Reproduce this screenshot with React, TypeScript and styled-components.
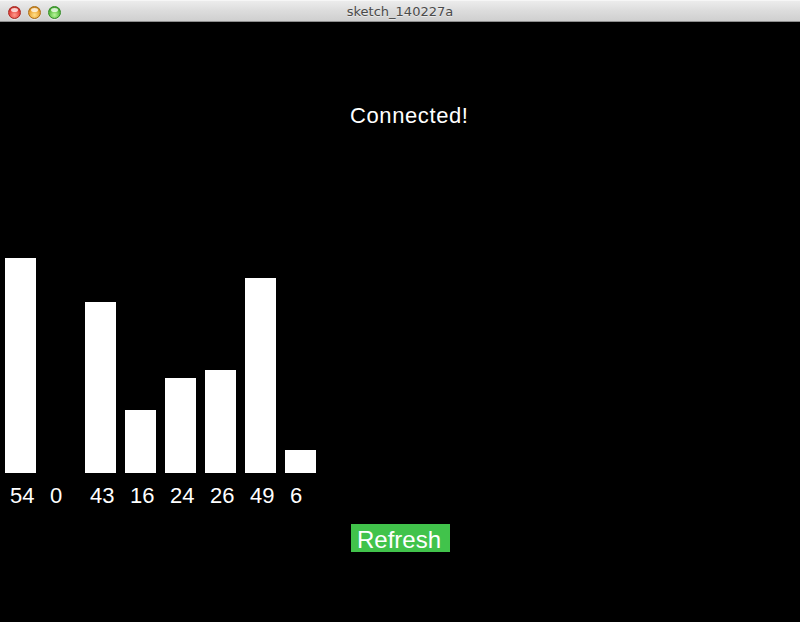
import React from "react";
import styled, { createGlobalStyle } from "styled-components";

const Global = createGlobalStyle`
  html, body { margin: 0; padding: 0; background: #000; }
  #root { width: 800px; height: 622px; overflow: hidden; }
`;

const Window = styled.div`
  width: 800px;
  height: 622px;
  display: flex;
  flex-direction: column;
  background: #000;
`;

const TitleBar = styled.div`
  position: relative;
  height: 22px;
  box-sizing: border-box;
  flex: none;
  background: linear-gradient(#ececec 0%, #dcdcdc 50%, #cfcfcf 100%);
  border-top: 1px solid #f6f6f6;
  border-bottom: 1px solid #8e8e8e;
  display: flex;
  align-items: center;
  justify-content: center;
`;

const Lights = styled.div`
  position: absolute;
  left: 8px;
  top: 5px;
  display: flex;
  gap: 7px;
`;

const Light = styled.span<{ $c: string; $d: string; $h: string }>`
  width: 13px;
  height: 13px;
  border-radius: 50%;
  box-sizing: border-box;
  border: 1px solid ${(p) => p.$d};
  background: radial-gradient(circle at 50% 72%, ${(p) => p.$h} 0%, ${(p) => p.$c} 55%, ${(p) => p.$d} 100%);
  box-shadow: 0 1px 1px rgba(255,255,255,0.6);
  position: relative;
  &::after {
    content: "";
    position: absolute;
    left: 2px;
    top: 1px;
    width: 7px;
    height: 4px;
    border-radius: 50%;
    background: rgba(255,255,255,0.75);
  }
`;

const Title = styled.div`
  font-family: "DejaVu Sans", sans-serif;
  font-size: 13px;
  color: #4a4a4a;
  line-height: 20px;
  padding-top: 2px;
  text-shadow: 0 1px 0 rgba(255,255,255,0.5);
`;

const Canvas = styled.div`
  flex: 1;
  background: #000;
  display: flex;
  flex-direction: column;
  align-items: flex-start;
  font-family: "Liberation Sans", Arial, sans-serif;
  color: #fff;
`;

const Status = styled.div`
  margin: 83px 0 0 350px;
  font-size: 22px;
  line-height: 22px;
  letter-spacing: 0.6px;
`;

const Chart = styled.div`
  margin: 131px 0 0 5px;
  display: flex;
  gap: 9px;
`;

const Column = styled.div`
  width: 31px;
  display: flex;
  flex-direction: column;
`;

const BarSlot = styled.div`
  height: 215px;
  display: flex;
  align-items: flex-end;
`;

const Bar = styled.div<{ $v: number }>`
  width: 31px;
  height: ${(p) => Math.max(0, p.$v * 4 - 1)}px;
  background: #fff;
`;

const Label = styled.div`
  margin: 12px 0 0 5px;
  font-size: 22px;
  line-height: 22px;
  white-space: nowrap;
`;

const Button = styled.button`
  margin: 17px 0 0 351px;
  width: 99px;
  height: 28px;
  box-sizing: border-box;
  padding: 3px 0 0 6px;
  border: none;
  background: #41c34b;
  color: #fff;
  font-family: "Liberation Sans", Arial, sans-serif;
  font-size: 24px;
  line-height: 25px;
  text-align: left;
  cursor: pointer;
`;

const values = [54, 0, 43, 16, 24, 26, 49, 6];

export default function App() {
  return (
    <>
      <Global />
      <Window>
        <TitleBar>
          <Lights>
            <Light $c="#e5463f" $d="#a8271f" $h="#ff9a8c" />
            <Light $c="#eba535" $d="#ab6c12" $h="#ffe08a" />
            <Light $c="#5fbf45" $d="#2f8a22" $h="#b8f59a" />
          </Lights>
          <Title>sketch_140227a</Title>
        </TitleBar>
        <Canvas>
          <Status>Connected!</Status>
          <Chart>
            {values.map((v, i) => (
              <Column key={i}>
                <BarSlot>
                  <Bar $v={v} />
                </BarSlot>
                <Label>{v}</Label>
              </Column>
            ))}
          </Chart>
          <Button>Refresh</Button>
        </Canvas>
      </Window>
    </>
  );
}
